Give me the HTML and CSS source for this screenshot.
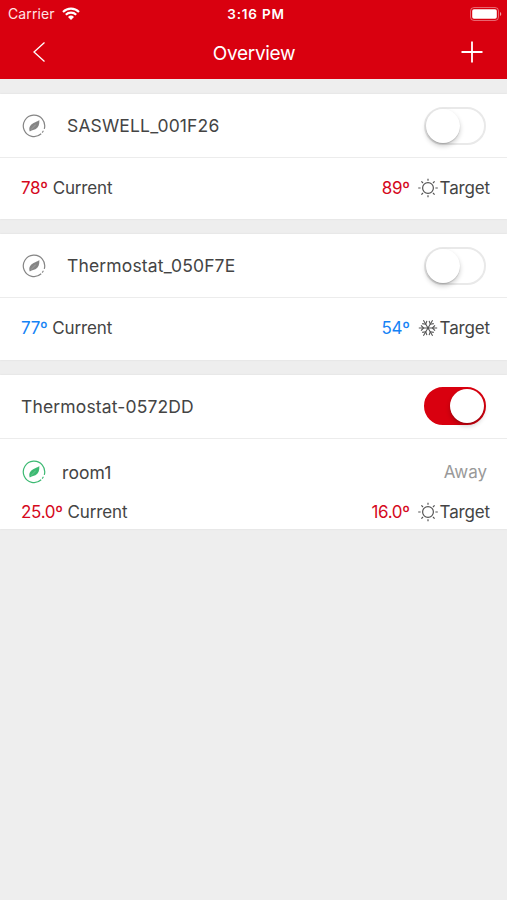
FILE: index.html
```html
<!DOCTYPE html>
<html lang="en">
<head>
    <meta charset="UTF-8">
    <meta name="viewport" content="width=device-width, initial-scale=1.0">
    <title>Overview</title>
    <link rel="stylesheet" href="styles.css">
</head>
<body>
    <!-- shared icons -->
    <svg class="sprite">
        <symbol id="leaf" viewBox="0 0 24 24">
            <path d="M19.2 19.8A10.7 10.7 0 1 1 22.3 14.8" fill="none" stroke="currentColor" stroke-width="1.2"/>
            <path d="M20.2 18.6L21.4 16.8" stroke="currentColor" stroke-width="1.1"/>
            <path d="M7.8 17.6C6.4 13.6 8.2 10.8 11.6 9C14 7.8 15.6 7.4 17.3 6C17.7 10.4 16.4 13.6 13.4 15.2C11.2 16.3 9.4 16 7.8 17.6Z" fill="currentColor"/>
            <path d="M9 15.6L13.8 10.6" stroke="#fff" stroke-width=".4" opacity=".6"/>
        </symbol>
        <symbol id="sun" viewBox="0 0 20 20">
            <g fill="none" stroke="currentColor" stroke-width="1.2">
                <circle cx="10" cy="10" r="5.4"/>
                <path d="M10 .7V2.8M10 17.2V19.3M.2 10H2.6M17.4 10H19.8M3.4 3.4L5 5M15 15L16.6 16.6M3.4 16.6L5 15M15 5L16.6 3.4"/>
            </g>
        </symbol>
        <symbol id="snow" viewBox="0 0 20 20">
            <g fill="none" stroke="currentColor" stroke-width="1.1">
                <path d="M.8 10H19.2M5.4 2.2L14.6 17.8M14.6 2.2L5.4 17.8"/>
                <path d="M3 7.4L5.6 10L3 12.6M17 7.4L14.4 10L17 12.6M4.2 5.6L7.7 6.2L8.9 2.9M15.8 5.6L12.3 6.2L11.1 2.9M4.2 14.4L7.7 13.8L8.9 17.1M15.8 14.4L12.3 13.8L11.1 17.1"/>
            </g>
        </symbol>
    </svg>

    <header class="header">
        <div class="status-bar">
            <div class="carrier">
                <span>Carrier</span>
                <svg class="wifi" viewBox="0 0 18 13">
                    <g fill="none" stroke="#fff" stroke-width="2.1">
                        <path d="M1 4.9A11.4 11.4 0 0 1 17 4.9"/>
                        <path d="M3.8 7.8A7.4 7.4 0 0 1 14.2 7.8"/>
                    </g>
                    <path d="M6 10A4.3 4.3 0 0 1 12 10L9 12.9Z" fill="#fff"/>
                </svg>
            </div>
            <span class="time">3:16 PM</span>
            <svg class="battery" viewBox="0 0 32 14">
                <rect x=".5" y=".5" width="28" height="13" rx="3.5" fill="none" stroke="#fff" stroke-opacity=".4"/>
                <rect x="2.2" y="2.2" width="24.6" height="9.6" rx="1.8" fill="#fff"/>
                <path d="M30 5A2.2 2.2 0 0 1 30 9Z" fill="#fff" fill-opacity=".6"/>
            </svg>
        </div>
        <nav class="nav-bar">
            <svg class="back" viewBox="0 0 14 22">
                <path d="M12.5 1.5L2 11L12.5 20.5" fill="none" stroke="#fff" stroke-width="1.3"/>
            </svg>
            <h1>Overview</h1>
            <svg class="add" viewBox="0 0 22 22">
                <path d="M11 .5V21.5M.5 11H21.5" stroke="#fff" stroke-width="1.8"/>
            </svg>
        </nav>
    </header>

    <main>
        <section class="card">
            <div class="card-head">
                <svg class="leaf"><use href="#leaf"/></svg>
                <span class="name">SASWELL_001F26</span>
                <span class="switch"></span>
            </div>
            <div class="temps">
                <span class="value hot">78º</span>
                <span class="label">Current</span>
                <span class="value hot target">89º</span>
                <svg class="mode"><use href="#sun"/></svg>
                <span class="label">Target</span>
            </div>
        </section>

        <section class="card">
            <div class="card-head">
                <svg class="leaf"><use href="#leaf"/></svg>
                <span class="name">Thermostat_050F7E</span>
                <span class="switch"></span>
            </div>
            <div class="temps">
                <span class="value cold">77º</span>
                <span class="label">Current</span>
                <span class="value cold target">54º</span>
                <svg class="mode"><use href="#snow"/></svg>
                <span class="label">Target</span>
            </div>
        </section>

        <section class="card">
            <div class="card-head">
                <span class="name">Thermostat-0572DD</span>
                <span class="switch on"></span>
            </div>
            <div class="room">
                <svg class="leaf green"><use href="#leaf"/></svg>
                <span class="room-name">room1</span>
                <span class="room-state">Away</span>
            </div>
            <div class="temps room-temps">
                <span class="value hot">25.0º</span>
                <span class="label">Current</span>
                <span class="value hot target">16.0º</span>
                <svg class="mode"><use href="#sun"/></svg>
                <span class="label">Target</span>
            </div>
        </section>
    </main>
</body>
</html>
```

FILE: styles.css
```css
* { box-sizing: border-box; }
body {
    margin: 0;
    min-height: 900px;
    background: #eee;
    color: #444;
    font-family: Inter, "Liberation Sans", sans-serif;
    font-size: 17px;
}
svg { display: block; flex: none; }
.sprite { position: absolute; width: 0; height: 0; }

.header { height: 79px; background: #d9000f; color: #fff; }
.status-bar {
    display: grid;
    grid-template-columns: 1fr auto 1fr;
    align-items: center;
    height: 27px;
    padding: 0 5px 0 8px;
}
.carrier { display: flex; align-items: center; gap: 7px; font-size: 14px; letter-spacing: 0.1px; color: #ffe4e5; }
.wifi { width: 18px; height: 13px; }
.time { padding-left: 2px; font-size: 13.5px; font-weight: 600; letter-spacing: 0.8px; }
.battery { width: 32px; height: 14px; justify-self: end; }
.nav-bar {
    display: flex;
    align-items: center;
    justify-content: space-between;
    height: 50px;
    padding: 0 24px 0 32px;
}
.nav-bar h1 { margin: 2px 0 0 1px; font-size: 19px; font-weight: 400; letter-spacing: -0.3px; }
.back { width: 14px; height: 22px; }
.add { width: 22px; height: 22px; }

main { display: flex; flex-direction: column; gap: 15px; padding-top: 15px; }
.card { background: #fff; box-shadow: 0 0 2px rgba(0, 0, 0, 0.08); }
.card-head {
    display: flex;
    align-items: center;
    height: 64px;
    padding: 0 21px;
    border-bottom: 1px solid #ececec;
}
.leaf { width: 24px; height: 24px; margin: 0 21px 0 1px; color: #858585; }
.leaf.green { color: #3cb972; margin-right: 16px; }
.name { font-size: 17.5px; letter-spacing: 0.15px; }

.switch {
    width: 62px;
    height: 38px;
    margin-left: auto;
    border: 2px solid #e9e9e9;
    border-radius: 19px;
    background: #fff;
}
.switch::before {
    content: "";
    display: block;
    width: 34px;
    height: 34px;
    border-radius: 50%;
    background: #fff;
    box-shadow: 0 3px 5px rgba(0, 0, 0, 0.2), 0 1px 1px rgba(0, 0, 0, 0.15);
}
.switch.on { border-color: #d9000f; background: #d9000f; }
.switch.on::before { margin-left: auto; }

.temps { display: flex; align-items: center; height: 61px; padding: 0 17px 2px 21px; }
.value { margin-right: 5px; letter-spacing: -0.3px; }
.target { margin: 0 8px 0 auto; }
.hot { color: #d5091d; }
.cold { color: #1683f5; }
.mode { width: 20px; height: 20px; margin-right: 2px; color: #555; }
.label { letter-spacing: -0.15px; }
.card + .card .temps { height: 61.5px; }

.room { display: flex; align-items: center; height: 66px; padding: 1px 20px 0 21px; }
.room-name { font-size: 17.5px; letter-spacing: 0.1px; }
.room-state { margin-left: auto; color: #999; }
.card .room + .room-temps { height: 24px; padding-bottom: 10px; }
```
